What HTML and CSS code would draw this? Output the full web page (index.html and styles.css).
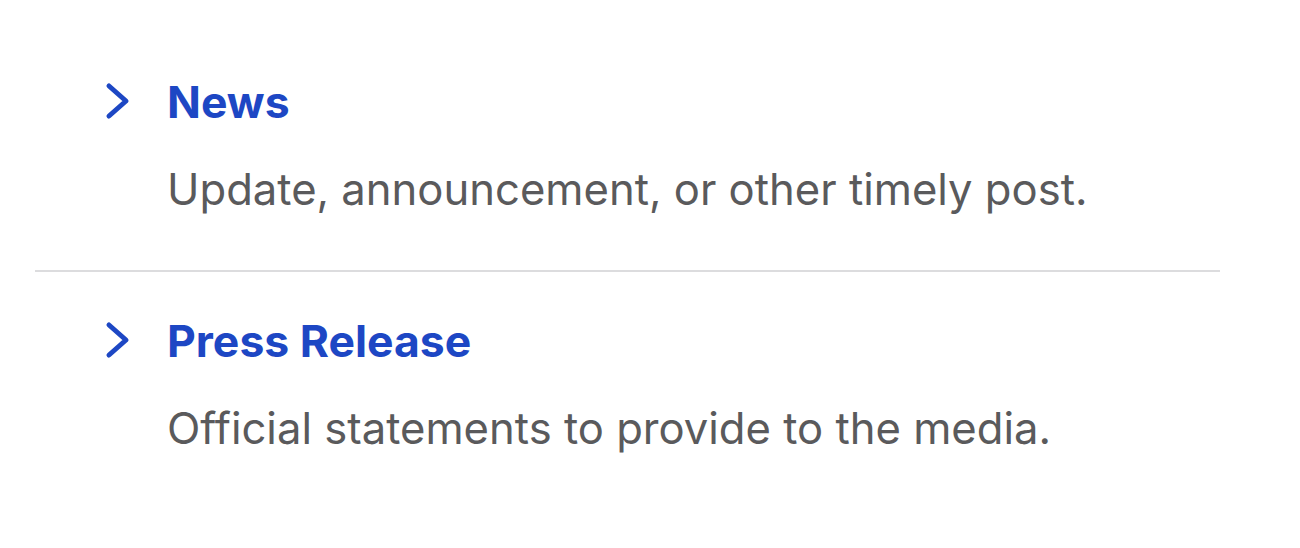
FILE: index.html
```html
<!DOCTYPE html>
<html lang="en">
<head>
  <meta charset="UTF-8">
  <meta name="viewport" content="width=device-width, initial-scale=1.0">
  <title>Content Types</title>
  <link rel="stylesheet" href="styles.css">
</head>
<body>
  <ul class="type_list">
    <li class="type_item">
      <svg class="chevron" viewBox="0 0 26 38" width="26" height="38">
        <polyline points="4,4 21,19 4,34"></polyline>
      </svg>
      <a href="#" class="type_title">News</a>
      <p class="type_desc">Update, announcement, or other timely post.</p>
    </li>
    <li class="type_item">
      <svg class="chevron" viewBox="0 0 26 38" width="26" height="38">
        <polyline points="4,4 21,19 4,34"></polyline>
      </svg>
      <a href="#" class="type_title">Press Release</a>
      <p class="type_desc">Official statements to provide to the media.</p>
    </li>
  </ul>
</body>
</html>
```

FILE: styles.css
```css
body {
  margin: 0;
  background-color: #ffffff;
  font-family: Inter, "Noto Sans", sans-serif;
}
.type_list {
  list-style: none;
  margin: 0;
  padding: 78px 0 0 0;
  margin-left: 35px;
  width: 1185px;
}
.type_item {
  display: grid;
  grid-template-columns: 59px 1fr;
  align-items: center;
  padding: 0 0 56px 73px;
  border-bottom: 2px solid #dcdcde;
}
.type_item + .type_item {
  padding-top: 45px;
  border-bottom: none;
}
.chevron {
  fill: none;
  stroke: #1d47c4;
  stroke-width: 5;
  stroke-linecap: round;
  stroke-linejoin: round;
  margin: -2px 0 0 -3px;
}
.type_title {
  font-size: 44.5px;
  line-height: 48px;
  font-weight: 700;
  color: #1d47c4;
  text-decoration: none;
}
.type_desc {
  grid-column: 2;
  margin: 40px 0 0 0;
  font-size: 43.6px;
  line-height: 48px;
  color: #5a5a5c;
}
```
